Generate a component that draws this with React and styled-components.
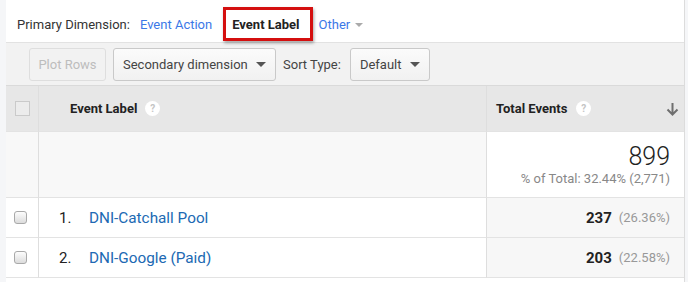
import React from "react";
import styled, { createGlobalStyle } from "styled-components";

const Global = createGlobalStyle`
  html, body { margin: 0; padding: 0; background: #f5f6f8; }
  body { font-family: Roboto, "Liberation Sans", Arial, sans-serif; color: #333; }
  * { box-sizing: border-box; }
`;

const Page = styled.div`
  width: 688px;
  height: 282px;
  padding-left: 6px;
  overflow: hidden;
`;

const Panel = styled.div`
  width: 679px;
  border-right: 1px solid #dcdcdc;
  background: #fff;
  min-height: 282px;
`;

const TopBar = styled.div`
  height: 43px;
  display: flex;
  align-items: center;
  padding: 7px 0 1px 11px;
  border-bottom: 1px solid #e2e2e2;
  font-size: 13px;
  white-space: nowrap;
`;

const Label = styled.span`
  color: #333;
  margin-right: 10px;
`;

const DimLink = styled.span`
  color: #3b78e7;
  margin-right: 11px;
`;

const ActiveDim = styled.span`
  display: inline-flex;
  align-items: center;
  height: 34px;
  padding: 0 10px 0 6px;
  border: 3px solid #d40f0f;
  box-shadow: 1px 2px 3px rgba(0, 0, 0, 0.35);
  font-weight: 700;
  color: #222;
  margin-right: 6px;
`;

const Caret = styled.span`
  display: inline-block;
  width: 0;
  height: 0;
  border-left: ${(p) => p.size || 4}px solid transparent;
  border-right: ${(p) => p.size || 4}px solid transparent;
  border-top: ${(p) => p.size || 4}px solid ${(p) => p.color || "#999"};
  margin-left: ${(p) => p.gap || 4}px;
  vertical-align: middle;
`;

const Toolbar = styled.div`
  height: 43px;
  background: #f2f2f2;
  display: flex;
  align-items: center;
  padding-left: 23px;
  padding-top: 1px;
  font-size: 13px;
  border-bottom: 1px solid #dadada;
  white-space: nowrap;
`;

const Button = styled.div`
  flex-shrink: 0;
  height: 33px;
  display: inline-flex;
  align-items: center;
  justify-content: ${(p) => (p.center ? "center" : "space-between")};
  width: ${(p) => p.w}px;
  padding: 0 9px 0 9px;
  border: 1px solid ${(p) => (p.disabled ? "#dedede" : "#c9c9c9")};
  border-radius: 3px;
  background: ${(p) => (p.disabled ? "#f2f2f2" : "linear-gradient(#fbfbfb, #f1f1f1)")};
  color: ${(p) => (p.disabled ? "#bdbdbd" : "#444")};
  font-size: 13px;
  white-space: nowrap;
  margin-right: ${(p) => p.mr || 0}px;
`;

const SortLabel = styled.span`
  color: #444;
  font-size: 13px;
  margin-right: 9px;
`;

const Grid = styled.div`
  display: grid;
  grid-template-columns: 33px 448px 197px;
`;

const Cell = styled.div`
  height: ${(p) => p.h}px;
  background: ${(p) => p.bg || "#fff"};
  border-bottom: 1px solid #e3e3e3;
  border-right: ${(p) => (p.divider ? "1px solid #dedede" : "none")};
  display: flex;
  align-items: ${(p) => p.align || "center"};
  justify-content: ${(p) => p.justify || "flex-start"};
  padding: ${(p) => p.pad || "0"};
  white-space: nowrap;
`;

const HeadText = styled.span`
  font-weight: 700;
  font-size: 13px;
  color: #222;
`;

const Help = styled.span`
  display: inline-flex;
  align-items: center;
  justify-content: center;
  width: 15px;
  height: 15px;
  border-radius: 50%;
  background: #fff;
  color: #c4c4c4;
  font-size: 10px;
  font-weight: 700;
  margin-left: ${(p) => p.ml || 8}px;
`;

const HeadBox = styled.span`
  width: 15px;
  height: 15px;
  border: 1px solid #cacaca;
  background: #ececec;
  margin-left: 9px;
`;

const RowBox = styled.span`
  width: 13px;
  height: 13px;
  border: 1px solid #a9a9a9;
  border-radius: 3px;
  background: linear-gradient(#fdfdfd, #dcdcdc);
  margin-left: 8px;
`;

const Summary = styled.div`
  display: flex;
  flex-direction: column;
  align-items: flex-end;
  padding-top: 11px;
  padding-right: 14px;
  width: 100%;
`;

const Big = styled.div`
  font-size: 25px;
  font-weight: 300;
  color: #222;
  line-height: 28px;
`;

const Small = styled.div`
  font-size: 13px;
  color: #888;
`;

const Rank = styled.span`
  width: 30px;
  margin-left: 20px;
  font-size: 15px;
  color: #222;
`;

const RowLink = styled.span`
  font-size: 15.3px;
  color: #2069b3;
`;

const Value = styled.span`
  font-weight: 700;
  font-size: 15px;
  color: #222;
`;

const Pct = styled.span`
  font-size: 13px;
  color: #999;
  margin-left: 7px;
`;

const SortArrow = () => (
  <svg width="13" height="14" viewBox="0 0 13 14" style={{ marginLeft: "auto" }}>
    <path d="M6.5 1v11M1.5 7.5l5 5 5-5" stroke="#6f6f6f" strokeWidth="2" fill="none" />
  </svg>
);

const rows = [
  { n: "1.", label: "DNI-Catchall Pool", v: "237", p: "(26.36%)" },
  { n: "2.", label: "DNI-Google (Paid)", v: "203", p: "(22.58%)" },
];

export default function App() {
  return (
    <Page>
      <Global />
      <Panel>
        <TopBar>
          <Label>Primary Dimension:</Label>
          <DimLink>Event Action</DimLink>
          <ActiveDim>Event Label</ActiveDim>
          <DimLink>
            Other
            <Caret color="#aaa" gap={5} />
          </DimLink>
        </TopBar>
        <Toolbar>
          <Button disabled center w={77} mr={7}>Plot Rows</Button>
          <Button w={163} mr={7}>
            Secondary dimension
            <Caret color="#555" size={5} />
          </Button>
          <SortLabel>Sort Type:</SortLabel>
          <Button w={80}>
            Default
            <Caret color="#555" size={5} />
          </Button>
        </Toolbar>
        <Grid>
          <Cell h={46} bg="#e7e7e7" divider>
            <HeadBox />
          </Cell>
          <Cell h={46} bg="#e7e7e7" divider pad="0 0 0 31px">
            <HeadText>Event Label</HeadText>
            <Help>?</Help>
          </Cell>
          <Cell h={46} bg="#e7e7e7" pad="0 5px 0 9px">
            <HeadText>Total Events</HeadText>
            <Help ml={9}>?</Help>
            <SortArrow />
          </Cell>

          <Cell h={66} bg="#f8f8f8" divider />
          <Cell h={66} bg="#f8f8f8" divider />
          <Cell h={66} bg="#fff" align="flex-start">
            <Summary>
              <Big>899</Big>
              <Small>% of Total: 32.44% (2,771)</Small>
            </Summary>
          </Cell>

          {rows.map((r) => (
            <React.Fragment key={r.n}>
              <Cell h={40} divider>
                <RowBox />
              </Cell>
              <Cell h={40} divider>
                <Rank>{r.n}</Rank>
                <RowLink>{r.label}</RowLink>
              </Cell>
              <Cell h={40} bg="#f7f7f7" justify="flex-end" pad="0 14px 0 0">
                <Value>{r.v}</Value>
                <Pct>{r.p}</Pct>
              </Cell>
            </React.Fragment>
          ))}
        </Grid>
      </Panel>
    </Page>
  );
}
